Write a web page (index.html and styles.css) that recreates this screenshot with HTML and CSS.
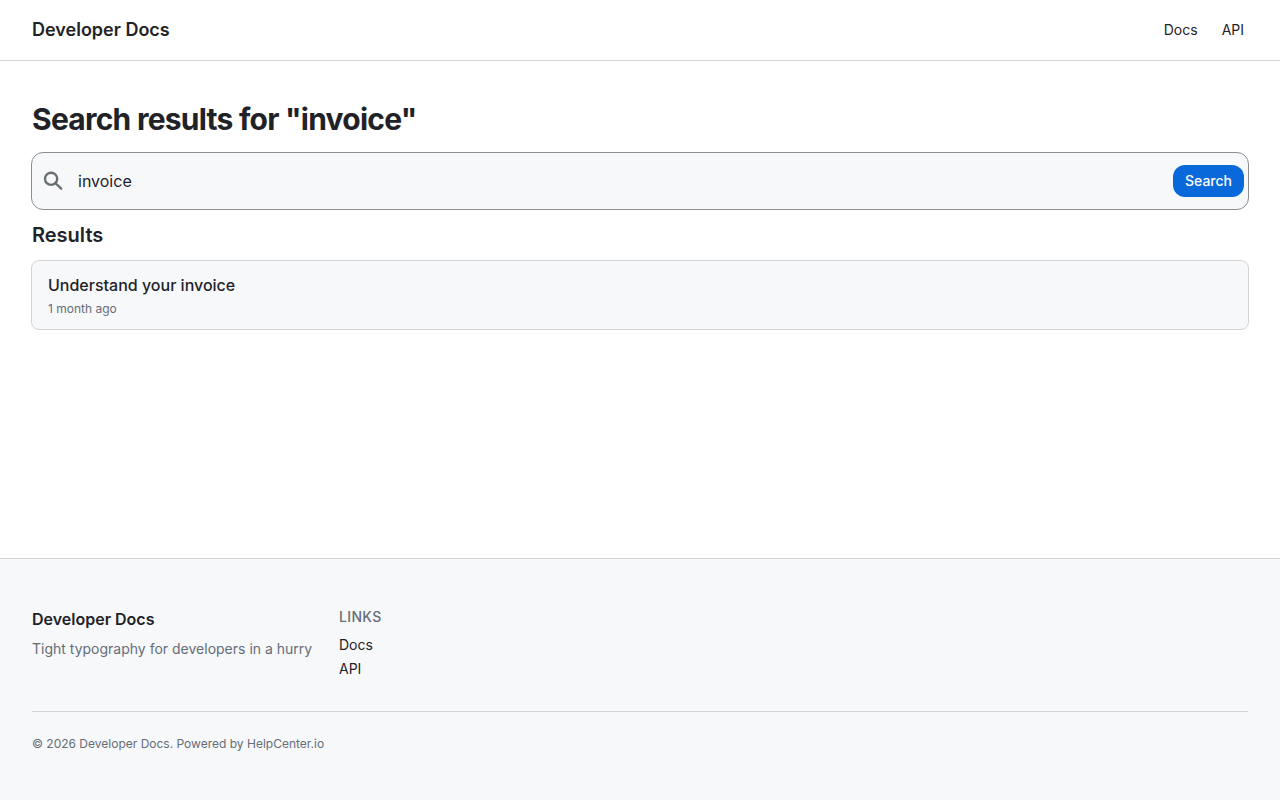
FILE: index.html
```html
<!DOCTYPE html>
<html lang="en">
<head>
  <meta charset="UTF-8" />
  <meta name="viewport" content="width=device-width, initial-scale=1.0" />
  <title>Search results - Developer Docs</title>
  <link rel="stylesheet" href="styles.css">
</head>
<body>
  <header class="site-header">
    <a class="brand" href="#">Developer Docs</a>
    <nav class="site-nav">
      <a href="#">Docs</a>
      <a href="#">API</a>
    </nav>
  </header>

  <main class="content">
    <h1>Search results for "invoice"</h1>

    <form class="search-box" role="search">
      <svg class="search-icon" viewBox="0 0 20 20" aria-hidden="true">
        <circle cx="8.1" cy="7.8" r="6.1" />
        <path d="M12.3 12 18.2 17.7" />
      </svg>
      <input type="text" name="q" value="invoice" aria-label="Search">
      <button type="submit">Search</button>
    </form>

    <h2>Results</h2>
    <a class="card" href="#">
      <h3>Understand your invoice</h3>
      <p>1 month ago</p>
    </a>
  </main>

  <footer class="site-footer">
    <div class="footer-columns">
      <div>
        <h4 class="footer-brand">Developer Docs</h4>
        <p class="tagline">Tight typography for developers in a hurry</p>
      </div>
      <nav class="footer-links">
        <h4>LINKS</h4>
        <a href="#">Docs</a>
        <a href="#">API</a>
      </nav>
    </div>
    <p class="copyright">© 2026 Developer Docs. Powered by <a href="#">HelpCenter.io</a></p>
  </footer>
</body>
</html>
```
FILE: styles.css
```css
* {
  box-sizing: border-box;
}
body {
  margin: 0;
  min-height: 100vh;
  display: flex;
  flex-direction: column;
  background: #fff;
  color: #1f2328;
  font-family: Inter, sans-serif;
  font-size: 14px;
  line-height: 20px;
}
h1, h2, h3, h4, p {
  margin: 0;
}
a {
  color: inherit;
  text-decoration: none;
}
.site-header {
  display: flex;
  align-items: center;
  justify-content: space-between;
  padding: 16px 36px 16px 32px;
  border-bottom: 1px solid #d2d6d9;
}
.brand {
  font-size: 18px;
  line-height: 28px;
  font-weight: 600;
}
.site-nav {
  display: flex;
  gap: 24px;
}
.content {
  flex: 1;
  padding: 38px 31px;
}
h1 {
  padding-left: 1px;
  font-size: 30px;
  line-height: 40px;
  font-weight: 700;
  letter-spacing: -0.025em;
}
.search-box {
  display: flex;
  align-items: center;
  margin: 13px 0 11px;
  padding: 12px 4px 12px 11px;
  border: 1px solid #8b8f92;
  border-radius: 12px;
  background: #f6f8fa;
}
.search-icon {
  width: 20px;
  height: 20px;
  fill: none;
  stroke: #68706f;
  stroke-width: 2.4;
  stroke-linecap: round;
}
.search-box input {
  flex: 1;
  min-width: 0;
  padding: 0 15px;
  border: none;
  outline: none;
  background: transparent;
  color: #1f2328;
  font-family: inherit;
  font-size: 16px;
  line-height: 24px;
}
.search-box button {
  padding: 6px 12px;
  border: none;
  border-radius: 12px;
  background: #0969da;
  color: #fff;
  font-family: inherit;
  font-size: 14px;
  font-weight: 500;
  line-height: 20px;
  cursor: pointer;
}
h2 {
  padding-left: 1px;
  font-size: 20px;
  line-height: 28px;
  font-weight: 600;
}
.card {
  display: block;
  margin-top: 11px;
  padding: 12px 16px;
  border: 1px solid #d2d6d9;
  border-radius: 8px;
  background: #f6f8fa;
}
.card h3 {
  font-size: 16px;
  line-height: 24px;
  font-weight: 500;
}
.card p {
  margin-top: 4px;
  color: #656d76;
  font-size: 12px;
  line-height: 16px;
}
.site-footer {
  padding: 48px 32px;
  border-top: 1px solid #d2d6d9;
  background: #f6f8fa;
}
.footer-columns {
  display: grid;
  grid-template-columns: repeat(4, 1fr);
  gap: 12px;
  padding-bottom: 32px;
  border-bottom: 1px solid #d2d6d9;
}
.footer-brand {
  font-size: 16px;
  line-height: 24px;
  font-weight: 600;
}
.tagline {
  margin-top: 8px;
  color: #656d76;
}
.footer-links {
  display: flex;
  flex-direction: column;
  gap: 4px;
}
.footer-links h4 {
  margin-bottom: 4px;
  color: #656d76;
  font-size: 14px;
  font-weight: 500;
  letter-spacing: 0.025em;
}
.copyright {
  padding-top: 24px;
  color: #656d76;
  font-size: 12px;
  line-height: 16px;
}
```
